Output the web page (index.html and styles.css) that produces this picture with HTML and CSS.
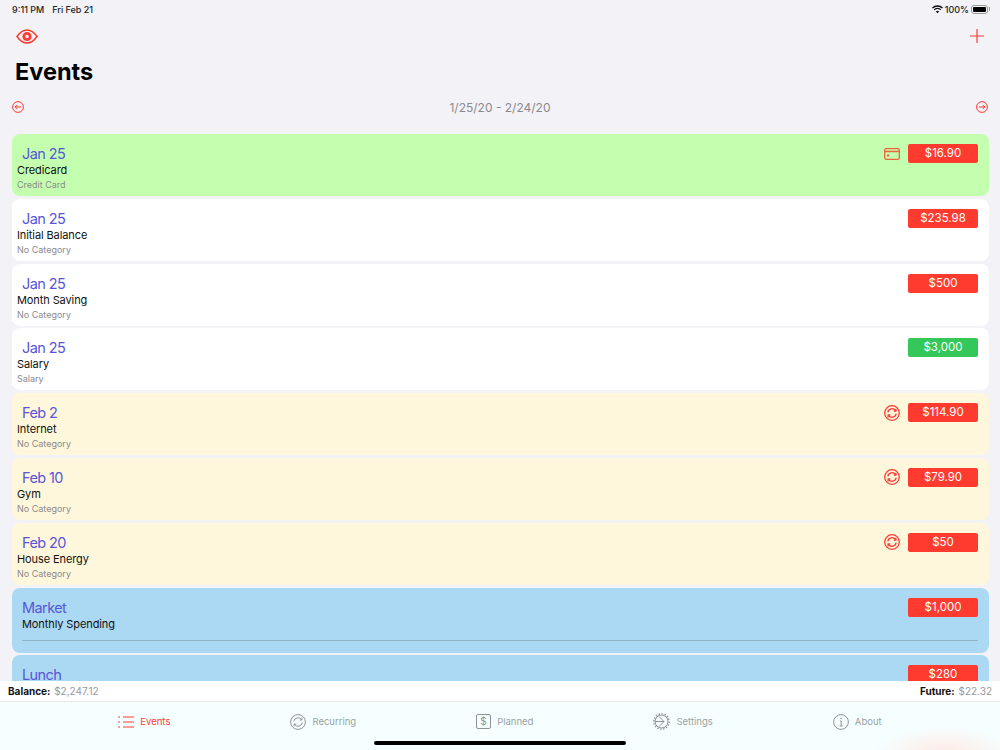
FILE: index.html
```html
<!DOCTYPE html>
<html lang="en">
<head>
  <meta charset="UTF-8" />
  <title>Events</title>
  <link rel="stylesheet" href="styles.css">
</head>
<body>

<div class="status-bar">
  <div class="status-left"><span>9:11 PM</span><span>Fri Feb 21</span></div>
  <div class="status-right">
    <svg class="wifi" viewBox="0 0 16 12" width="11" height="9"><path d="M8 11.5 5.600 8.900a3.400 3.400 0 0 1 4.800 0ZM3.900 7.200 2.600 5.800a7.600 7.600 0 0 1 10.800 0l-1.300 1.400a5.800 5.800 0 0 0-8.200 0ZM1.400 4.600 0 3.200a11.300 11.300 0 0 1 16 0l-1.400 1.400a9.400 9.400 0 0 0-13.200 0Z" fill="#111"/></svg>
    <span>100%</span>
    <div class="battery"><div class="battery-fill"></div></div>
  </div>
</div>

<div class="top-icons">
  <svg viewBox="0 0 22 15" width="22" height="15" fill="none" stroke="#ff3b30"><path d="M1 7.500C4 3.200 7.300 1 11 1s7 2.200 10 6.500C18 11.800 14.700 14 11 14S4 11.800 1 7.500Z" stroke-width="1.500"/><circle cx="11" cy="7.500" r="3.200" stroke-width="2.800"/></svg>
  <svg viewBox="0 0 14 14" width="14" height="14" stroke="#ff3b30" stroke-width="1.200"><path d="M7 0v14M0 7h14"/></svg>
</div>

<h1 class="title">Events</h1>

<div class="date-nav">
  <svg viewBox="0 0 12 12" width="12" height="12" fill="none" stroke="#ff3b30"><circle cx="6" cy="6" r="5.400"/><path d="M9 6H3.200M5.200 4 3.200 6l2 2"/></svg>
  <span>1/25/20 - 2/24/20</span>
  <svg viewBox="0 0 12 12" width="12" height="12" fill="none" stroke="#ff3b30"><circle cx="6" cy="6" r="5.400"/><path d="M3 6h5.800M6.800 4l2 2-2 2"/></svg>
</div>

<div class="list">
  <div class="card green">
    <div class="card-info">
      <div class="card-date">Jan 25</div>
      <div class="card-name">Credicard</div>
      <div class="card-cat">Credit Card</div>
    </div>
    <div class="card-right">
      <svg class="ico" viewBox="0 0 16 12" width="16" height="12" fill="none" stroke="#f0603c" stroke-width="1.300"><rect x=".7" y=".7" width="14.600" height="10.600" rx="1.500"/><path d="M.7 3.500h14.600" stroke-width="1.500"/><rect x="3" y="6.500" width="2.200" height="2" fill="#f0603c" stroke="none"/></svg>
      <div class="amount">$16.90</div>
    </div>
  </div>

  <div class="card">
    <div class="card-info">
      <div class="card-date">Jan 25</div>
      <div class="card-name">Initial Balance</div>
      <div class="card-cat">No Category</div>
    </div>
    <div class="card-right"><div class="amount">$235.98</div></div>
  </div>

  <div class="card">
    <div class="card-info">
      <div class="card-date">Jan 25</div>
      <div class="card-name">Month Saving</div>
      <div class="card-cat">No Category</div>
    </div>
    <div class="card-right"><div class="amount">$500</div></div>
  </div>

  <div class="card">
    <div class="card-info">
      <div class="card-date">Jan 25</div>
      <div class="card-name">Salary</div>
      <div class="card-cat">Salary</div>
    </div>
    <div class="card-right"><div class="amount income">$3,000</div></div>
  </div>

  <div class="card yellow">
    <div class="card-info">
      <div class="card-date">Feb 2</div>
      <div class="card-name">Internet</div>
      <div class="card-cat">No Category</div>
    </div>
    <div class="card-right">
      <svg class="ico" viewBox="0 0 16 16" width="16" height="16" fill="none" stroke="#ff3b30" stroke-width="1.300"><circle cx="8" cy="8" r="7.300"/><path d="M3.800 7.300A4.300 4.300 0 0 1 11.500 5.500M12.200 8.700A4.300 4.300 0 0 1 4.500 10.500"/><path d="M11.900 3.700v2.300H9.700M4.100 12.300V10h2.200"/></svg>
      <div class="amount">$114.90</div>
    </div>
  </div>

  <div class="card yellow">
    <div class="card-info">
      <div class="card-date">Feb 10</div>
      <div class="card-name">Gym</div>
      <div class="card-cat">No Category</div>
    </div>
    <div class="card-right">
      <svg class="ico" viewBox="0 0 16 16" width="16" height="16" fill="none" stroke="#ff3b30" stroke-width="1.300"><circle cx="8" cy="8" r="7.300"/><path d="M3.800 7.300A4.300 4.300 0 0 1 11.500 5.500M12.200 8.700A4.300 4.300 0 0 1 4.500 10.500"/><path d="M11.900 3.700v2.300H9.700M4.100 12.300V10h2.200"/></svg>
      <div class="amount">$79.90</div>
    </div>
  </div>

  <div class="card yellow">
    <div class="card-info">
      <div class="card-date">Feb 20</div>
      <div class="card-name">House Energy</div>
      <div class="card-cat">No Category</div>
    </div>
    <div class="card-right">
      <svg class="ico" viewBox="0 0 16 16" width="16" height="16" fill="none" stroke="#ff3b30" stroke-width="1.300"><circle cx="8" cy="8" r="7.300"/><path d="M3.800 7.300A4.300 4.300 0 0 1 11.500 5.500M12.200 8.700A4.300 4.300 0 0 1 4.500 10.500"/><path d="M11.900 3.700v2.300H9.700M4.100 12.300V10h2.200"/></svg>
      <div class="amount">$50</div>
    </div>
  </div>

  <div class="card blue">
    <div class="group-head">
      <div class="card-info group-info">
        <div class="card-date">Market</div>
        <div class="card-name">Monthly Spending</div>
      </div>
      <div class="card-right"><div class="amount">$1,000</div></div>
    </div>
    <div class="group-line"></div>
  </div>

  <div class="card blue">
    <div class="group-head">
      <div class="card-info group-info">
        <div class="card-date">Lunch</div>
      </div>
      <div class="card-right"><div class="amount">$280</div></div>
    </div>
  </div>
</div>

<div class="balance-bar">
  <div><b>Balance:</b> <span>$2,247.12</span></div>
  <div><b>Future:</b> <span>$22.32</span></div>
</div>

<div class="tabs">
  <div class="tab active">
    <svg viewBox="0 0 16 12" width="16" height="12" fill="none" stroke="#ff3b30" stroke-width="1.100"><path d="M5 1h11M5 6h11M5 11h11M0 1h2M0 6h2M0 11h2" /></svg>
    <span>Events</span>
  </div>
  <div class="tab">
    <svg viewBox="0 0 16 16" width="16" height="16" fill="none" stroke="#8e9496"><circle cx="8" cy="8" r="7.400"/><path d="M3.800 7.300A4.300 4.300 0 0 1 11.500 5.500M12.200 8.700A4.300 4.300 0 0 1 4.500 10.500"/><path d="M11.900 3.700v2.300H9.700M4.100 12.300V10h2.200"/></svg>
    <span>Recurring</span>
  </div>
  <div class="tab">
    <svg viewBox="0 0 15 15" width="15" height="15" fill="none" stroke="#8e9496"><rect x=".5" y=".5" width="14" height="14" rx="1.500"/><text x="7.500" y="11" font-size="10" font-family="Inter" text-anchor="middle" fill="#8e9496" stroke="none">$</text></svg>
    <span>Planned</span>
  </div>
  <div class="tab">
    <svg viewBox="0 0 17 17" width="17" height="17" fill="none" stroke="#8e9496"><circle cx="8.500" cy="8.500" r="6.500"/><circle cx="8.500" cy="8.500" r="7.700" stroke-width="1.400" stroke-dasharray="1.400 1.600"/><path d="M6 3.500 11 8.500H2M11 8.500 6 13.500"/></svg>
    <span>Settings</span>
  </div>
  <div class="tab">
    <svg viewBox="0 0 16 16" width="16" height="16" fill="none" stroke="#8e9496"><circle cx="8" cy="8" r="7.400"/><path d="M6.800 7h1.400v5M6.500 12h3.200"/><circle cx="8" cy="4.500" r=".8" fill="#8e9496" stroke="none"/></svg>
    <span>About</span>
  </div>
  <div class="home-bar"></div>
</div>

</body>
</html>
```

FILE: styles.css
```css
html, body {
  margin: 0;
  padding: 0;
}
body {
  font-family: Inter, 'Noto Sans', sans-serif;
  background: #f2f2f7;
  color: #000;
  width: 1000px;
  height: 750px;
  overflow: hidden;
  display: flex;
  flex-direction: column;
}
.status-bar {
  display: flex;
  justify-content: space-between;
  align-items: center;
  height: 18px;
  padding: 0 12px;
  font-size: 9px;
  font-weight: 500;
  color: #222;
  flex: none;
}
.status-left {
  display: flex;
  gap: 8px;
}
.status-right {
  display: flex;
  align-items: center;
  gap: 2px;
}
.battery {
  position: relative;
  box-sizing: border-box;
  width: 17px;
  height: 9px;
  border: 1px solid #999;
  border-radius: 3px;
  padding: 1px;
}
/* кончик батареи */
.battery::after {
  content: "";
  position: absolute;
  right: -3px;
  top: 1.500px;
  width: 1.500px;
  height: 4px;
  background: #999;
}
.battery-fill {
  width: 100%;
  height: 100%;
  background: #000;
  border-radius: 1px;
}
.top-icons {
  display: flex;
  justify-content: space-between;
  align-items: center;
  padding: 10px 16px 0;
  height: 16px;
  flex: none;
}
.title {
  margin: 13px 0 0 15px;
  font-size: 23.500px;
  line-height: 30px;
  font-weight: 700;
  flex: none;
}
.date-nav {
  display: flex;
  justify-content: space-between;
  align-items: center;
  margin-top: 10px;
  padding: 0 12px;
  height: 20px;
  color: #8a8a8e;
  font-size: 12px;
  flex: none;
}
.list {
  flex: 1;
  min-height: 0;
  overflow: hidden;
  margin-top: 17px;
  padding: 0 11px 0 12px;
  display: flex;
  flex-direction: column;
  gap: 2.800px;
}
.card {
  flex: none;
  height: 62px;
  box-sizing: border-box;
  background: #fff;
  border-radius: 8px;
  display: flex;
  justify-content: space-between;
  padding: 10px 11px 0 5px;
}
.green { background: #c4ffb0; }
.yellow { background: #fff7dc; }
.blue {
  background: #abd9f3;
  display: block;
  height: 65px;
  padding-left: 10px;
}
.group-head {
  display: flex;
  justify-content: space-between;
}
.group-line {
  height: 1px;
  background: #8fb4c8;
  margin-top: 8px;
}
.card-date {
  font-size: 14.500px;
  letter-spacing: -0.600px;
  line-height: 19px;
  color: #5856d6;
  padding-left: 5px;
}
.group-info .card-date {
  padding-left: 0;
}
.card-name {
  font-size: 11px;
  letter-spacing: -0.100px;
  line-height: 15px;
  color: #111;
}
.card-cat {
  font-size: 9px;
  line-height: 12px;
  margin-top: 1px;
  color: #8a8a8e;
}
.card-right {
  display: flex;
  align-items: center;
  gap: 8px;
  height: 19px;
}
.amount {
  width: 70px;
  height: 19px;
  line-height: 19px;
  background: #ff3b30;
  color: #fff;
  border-radius: 2px;
  text-align: center;
  font-size: 11.500px;
}
.income {
  background: #34c759;
}
.balance-bar {
  flex: none;
  height: 20px;
  background: #fff;
  display: flex;
  justify-content: space-between;
  align-items: center;
  padding: 0 8px;
  font-size: 10px;
  color: #9a9a9e;
}
.balance-bar b {
  color: #111;
}
.balance-bar span {
  margin-left: 1px;
}
.tabs {
  flex: none;
  position: relative;
  height: 49px;
  border-top: 1.500px solid #e6e8ea;
  background: radial-gradient(ellipse 70px 28px at 945px 52px, #ffe9e4, rgba(255,233,228,0) 100%), #f5ffff;
  display: flex;
  justify-content: center;
  gap: 120px;
  padding: 11px 0 0;
  box-sizing: border-box;
}
.tab {
  display: flex;
  align-items: center;
  gap: 6px;
  height: 17px;
  font-size: 9.500px;
  color: #9a9fa1;
}
.tab.active {
  color: #ff3b30;
}
.home-bar {
  position: absolute;
  left: 374px;
  bottom: 5px;
  width: 252px;
  height: 4px;
  border-radius: 2px;
  background: #000;
}
```
